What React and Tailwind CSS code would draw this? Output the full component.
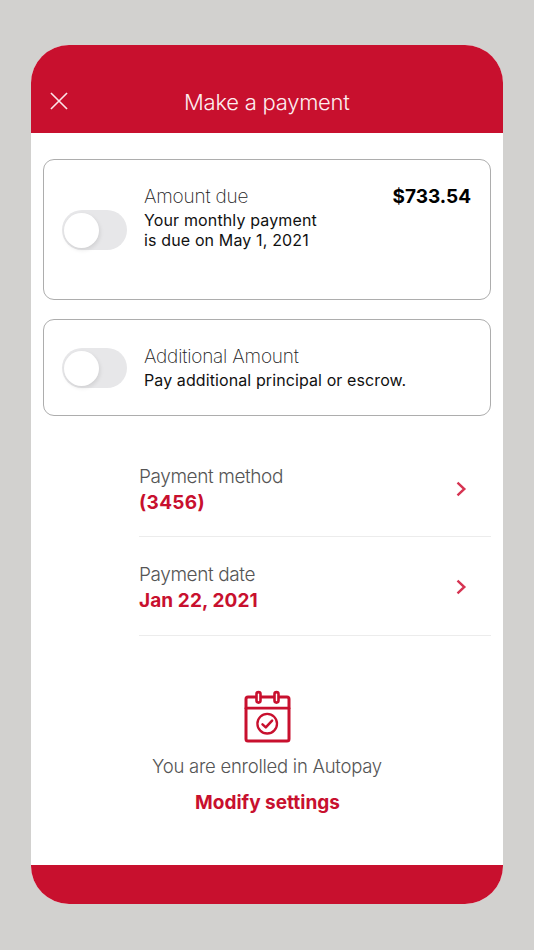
function Toggle({ className }) {
  return (
    <button
      type="button"
      role="switch"
      aria-checked="false"
      className={`ml-[18px] flex h-10 w-[65px] shrink-0 items-center rounded-full bg-[#e7e7e9] p-[2px] ${className}`}
    >
      <span className="size-[35px] rounded-full bg-white shadow-[1px_2px_4px_rgba(0,0,0,0.1)]" />
    </button>
  );
}

function Row({ label, value, valueClass, className }) {
  return (
    <div className={`ml-[108px] mr-3 flex border-b border-[#ececec] ${className}`}>
      <div className="grow whitespace-nowrap">
        <p className="text-[19px] leading-6 font-light tracking-[-0.4px] text-[#555]">{label}</p>
        <p className={`mt-[2px] text-[19px] leading-6 font-bold text-[#c8102e] ${valueClass}`}>{value}</p>
      </div>
      <svg className="mt-[16px] mr-[24px] h-4 w-[11px]" viewBox="0 0 11 16" fill="none" stroke="#d63452" strokeWidth="2.4">
        <path d="M1.5 1.7 8.3 8 1.5 14.3" />
      </svg>
    </div>
  );
}

export default function App() {
  return (
    <main className="flex h-[950px] w-[534px] flex-col bg-[#d2d1cf] px-[31px] pt-[45px] font-['Inter',sans-serif]">
      <section className="flex h-[859px] w-[472px] flex-col overflow-hidden rounded-[38px] bg-white">
        <header className="flex h-[88px] shrink-0 bg-[#c8102e] pt-[42px] text-white">
          <svg className="mt-[5px] ml-[19px] size-[18px] shrink-0" viewBox="0 0 19 19" fill="none" stroke="#fce4e8" strokeWidth="1.7">
            <path d="M1 1 18 18M18 1 1 18" />
          </svg>
          <h1 className="mt-px ml-[116px] text-[22px] leading-[29px] font-light tracking-[-0.25px] whitespace-nowrap text-[#fdeef0]">
            Make a payment
          </h1>
        </header>

        <div className="mx-3 mt-[26px] flex h-[141px] shrink-0 rounded-[11px] border border-[#adadad]">
          <Toggle className="mt-[50px]" />
          <div className="ml-[17px] pt-[25px] whitespace-nowrap">
            <p className="text-[19px] leading-6 font-extralight tracking-[-0.2px] text-[#222]">Amount due</p>
            <p className="mt-px text-[16px] leading-5 tracking-[0.14px] text-[#111]">
              Your monthly payment
              <br />
              is due on May 1, 2021
            </p>
          </div>
          <p className="mt-[25px] mr-[19px] ml-auto text-[19px] leading-6 font-bold text-black">$733.54</p>
        </div>

        <div className="mx-3 mt-[19px] flex h-[97px] shrink-0 rounded-[11px] border border-[#adadad]">
          <Toggle className="mt-[28px]" />
          <div className="ml-[17px] pt-[25px] whitespace-nowrap">
            <p className="text-[19px] leading-6 font-extralight tracking-[-0.2px] text-[#222]">Additional Amount</p>
            <p className="mt-px text-[16px] leading-5 tracking-[0.1px] text-[#111]">
              Pay additional principal or escrow.
            </p>
          </div>
        </div>

        <Row label="Payment method" value="(3456)" valueClass="tracking-[0.35px]" className="mt-[49px] h-[72px]" />
        <Row label="Payment date" value="Jan 22, 2021" valueClass="tracking-[0.1px]" className="mt-[26px] h-[73px]" />

        <div className="flex flex-col items-center pt-[54px] whitespace-nowrap">
          <svg className="h-[54px] w-[47px]" viewBox="0 0.6 47 54" fill="none" stroke="#c8102e" strokeWidth="3" strokeLinejoin="round" strokeLinecap="round">
            <rect x="2" y="7.5" width="43" height="44" rx="2" />
            <path d="M2 18.8h43" strokeWidth="2.7" />
            <rect x="12.5" y="2.7" width="4" height="10.5" rx="2" fill="#fff" strokeWidth="2.6" />
            <rect x="30.5" y="2.7" width="4" height="10.5" rx="2" fill="#fff" strokeWidth="2.6" />
            <circle cx="23.2" cy="34.3" r="9.8" strokeWidth="2.3" />
            <path d="m18.5 35 3.3 3 6.3-6.8" strokeWidth="2.5" />
          </svg>
          <p className="mt-[10px] text-[18.5px] leading-6 font-light tracking-[-0.25px] text-[#555]">
            You are enrolled in Autopay
          </p>
          <p className="mt-[13px] ml-px text-[19px] leading-6 font-bold text-[#c8102e]">Modify settings</p>
        </div>

        <footer className="mt-auto h-[39px] shrink-0 bg-[#c8102e]" />
      </section>
    </main>
  );
}
